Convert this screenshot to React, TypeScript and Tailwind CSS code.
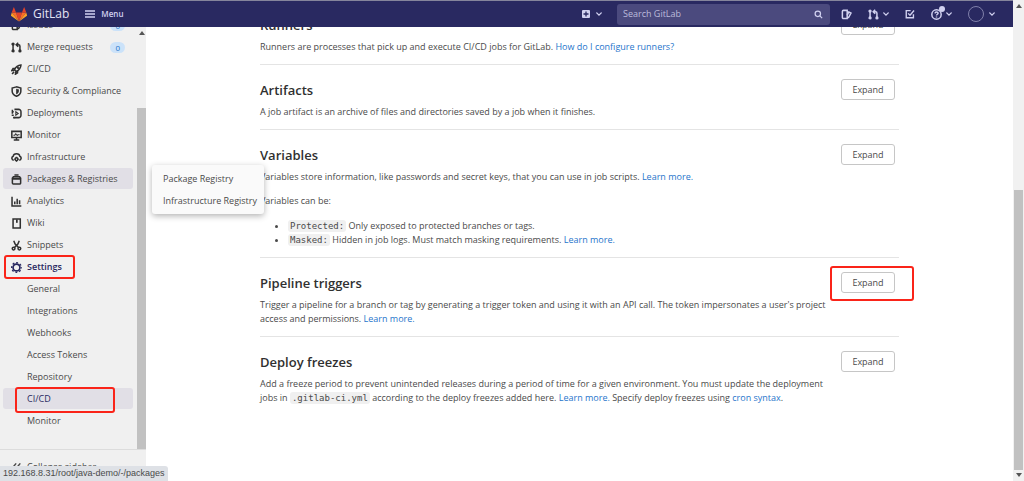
import { ReactNode } from "react"

const iconPaths: Record<string, ReactNode> = {
  issues: <><path d="M9 13.800H3.500A1.500 1.500 0 0 1 2 12.300V3.500A1.500 1.500 0 0 1 3.500 2H9z" /><path d="M9 4.500h2.500L14.500 6 11 12.500H9M11 5l-2 4" /></>,
  merge: <><path d="M3 3v10.500" /><path d="M8 4h3a2 2 0 0 1 2 2v7.500M10.500 1L7.500 4l3 3" /><circle cx="3" cy="3" r="1.300" /><circle cx="13" cy="13" r="1.300" /><circle cx="3" cy="13" r="1.300" /></>,
  rocket: <><path d="M5 8.500C7 4 10 1.800 14.500 1.500 14.200 6 12 9 7.500 11z" /><path d="M6 6.500H3L1.200 9.500l3.500-.5M9.500 10v3l-3 1.800.5-3.500M4.500 11.500L1.500 14.500" /><circle cx="10.500" cy="5.500" r=".8" /></>,
  shield: <><path d="M8 1.300L1.700 3v4.500C1.700 11 4.500 13.500 8 15c3.500-1.500 6.300-4 6.300-7.500V3z" /><path d="M8 4.500v7c2-1 3-2.300 3-4V5.300z" fill="currentColor" strokeWidth="1" /></>,
  deploy: <><path d="M5 2h6a3.500 3.500 0 0 1 3.500 3.500v5A3.500 3.500 0 0 1 11 14H5" /><path d="M1 5.500h3M1 10.500h3M2 2.500v6M3 14h3" /><path d="M7 5.500L10.500 8 7 10.500z" strokeWidth="1.500" /></>,
  monitor: <><path d="M1.200 2h13.600v9H1.200zM4 14.500h8M8 11v3.500" /><path d="M3.500 7.500h2l1.500-2 2 2.500 1-1h2.500" strokeWidth="1.500" /></>,
  cloud: <><path d="M4 12a3 3 0 0 1-.800-5.800C3.500 3.800 5.500 2.500 8 2.500s4.500 1.300 4.800 3.700A3 3 0 0 1 12 12" /><circle cx="8" cy="10.500" r="2" /><path d="M8 7v1.500M8 12.500V14M5 10.500h1M10 10.500h1" /></>,
  package: <><path d="M2 6.500h12V13a1.500 1.500 0 0 1-1.500 1.500h-9A1.500 1.500 0 0 1 2 13z" /><path d="M2 6.500L3.500 4h9L14 6.500M5 1.500h6" /><path d="M2 7h12" strokeWidth="2.500" /></>,
  chart: <><path d="M1.500 1v13.500H15" /><path d="M5.500 8v4M9 4v8M12.500 6v6" /></>,
  wiki: <><path d="M3 1.500h10.500v13H3z" /><path d="M8.500 2v5" strokeWidth="2.500" /></>,
  snippets: <><circle cx="3.800" cy="12.500" r="2" /><circle cx="12.200" cy="12.500" r="2" /><path d="M4 1l2 5 5 5M12 1l-2 5-5 5" /></>,
  todo: <><path d="M13.500 8.500V14H2V2.500h7" /><path d="M5 7l3 3 6.500-7.500" /></>,
  help: <><circle cx="8" cy="8" r="6.800" /><path d="M5.800 6.300C6 4.800 7 4.300 8 4.300c1.300 0 2.300.7 2.300 1.900C10.300 7.600 8 7.700 8 9.500M8 11v1.300" /></>,
  search: <><circle cx="6.800" cy="6.800" r="4.800" /><path d="M10.500 10.500L14.500 14.500" /></>,
  collapse: <path d="M7.500 2L2.500 8l5 6M13.500 2l-5 6 5 6" />,
}

function Icon({ name, className = "size-[11px]" }: { name: string; className?: string }) {
  return (
    <svg viewBox="0 0 16 16" fill="none" stroke="currentColor" strokeWidth="2.200" className={`shrink-0 ${className}`} aria-hidden="true">
      {iconPaths[name]}
    </svg>
  )
}

// eight teeth around a ring
function Gear() {
  return (
    <svg viewBox="0 0 16 16" fill="none" stroke="currentColor" className="size-[11px] shrink-0" aria-hidden="true">
      <circle cx="8" cy="8" r="5" strokeWidth="2.500" />
      <circle cx="8" cy="8" r="7" strokeWidth="2" strokeDasharray="2.750 2.750" strokeDashoffset="1.370" />
    </svg>
  )
}

function Chevron() {
  return (
    <svg viewBox="0 0 8 8" fill="none" stroke="currentColor" strokeWidth="1.800" className="size-[6px] shrink-0" aria-hidden="true">
      <path d="M1 2.500l3 3 3-3" strokeLinecap="round" />
    </svg>
  )
}

function Logo() {
  return (
    <svg viewBox="0 0 32 30" className="h-[15px] w-4" aria-hidden="true">
      <path d="M16 29L22 11H10z" fill="#e24329" />
      <path d="M16 29L10 11H1.500zM16 29L22 11h8.500z" fill="#fc6d26" />
      <path d="M1.500 11L0 16.500c-.2.700 0 1.200.6 1.700L16 29zM30.500 11L32 16.500c.2.700 0 1.200-.6 1.700L16 29z" fill="#fca326" />
      <path d="M1.500 11H10L6.200 1c-.2-.6-.8-.6-1 0zM30.500 11H22L25.800 1c.2-.6.8-.6 1 0z" fill="#e24329" />
    </svg>
  )
}

function Marker({ className }: { className: string }) {
  return <span className={`pointer-events-none absolute z-10 rounded-[3px] border-2 border-[#fa2419] ${className}`} />
}

const menuItems = [
  { label: "Issues", icon: "issues", count: 0 },
  { label: "Merge requests", icon: "merge", count: 0 },
  { label: "CI/CD", icon: "rocket" },
  { label: "Security & Compliance", icon: "shield" },
  { label: "Deployments", icon: "deploy" },
  { label: "Monitor", icon: "monitor" },
  { label: "Infrastructure", icon: "cloud" },
  { label: "Packages & Registries", icon: "package", flyout: ["Package Registry", "Infrastructure Registry"] },
  { label: "Analytics", icon: "chart" },
  { label: "Wiki", icon: "wiki" },
  { label: "Snippets", icon: "snippets" },
]

const settingsItems = ["General", "Integrations", "Webhooks", "Access Tokens", "Repository", "CI/CD", "Monitor"]

function Header() {
  return (
    <header className="fixed inset-x-0 top-0 z-20 mr-[11px] flex h-[27px] items-center border-t border-[#85859c] bg-[#292961] pr-[18px] pl-[11px] text-[#d1d1f0]">
      <a href="#" className="flex items-center gap-[6px] text-[12px] text-[#e4e4f4]">
        <Logo />
        GitLab
      </a>
      <button className="ml-4 flex items-center gap-[6px] text-[8px] font-semibold">
        <svg viewBox="0 0 10 8" stroke="currentColor" strokeWidth="1.500" className="h-2 w-[10px]" aria-hidden="true">
          <path d="M0 1h10M0 4h10M0 7h10" />
        </svg>
        Menu
      </button>
      <button aria-label="Create new" className="ml-auto flex items-center gap-[6px]">
        <svg viewBox="0 0 8 8" className="size-2" aria-hidden="true">
          <rect width="8" height="8" rx="1" fill="currentColor" />
          <path d="M4 1.500v5M1.500 4h5" stroke="#292961" strokeWidth="1.300" />
        </svg>
        <Chevron />
      </button>
      <div className="ml-[15px] flex h-[21px] w-[213px] items-center rounded-[3px] bg-[#4b4a7e] pr-[7px] pl-[6px]">
        <input aria-label="Search GitLab" placeholder="Search GitLab" className="min-w-0 flex-1 bg-transparent text-[9px] outline-none placeholder:text-[#bcbbdc]" />
        <Icon name="search" className="size-[9px]" />
      </div>
      <div className="ml-[11px] flex items-center gap-4">
        <button aria-label="Issues"><Icon name="issues" /></button>
        <button aria-label="Merge requests" className="flex items-center gap-1"><Icon name="merge" /><Chevron /></button>
        <button aria-label="To-Do List"><Icon name="todo" className="size-[10px]" /></button>
        <button aria-label="Help" className="relative flex items-center gap-1">
          <Icon name="help" />
          <span className="absolute -top-[3px] left-2 size-[6px] rounded-full bg-[#d1d1f0]" />
          <Chevron />
        </button>
        <button aria-label="Account" className="flex items-center gap-[5px]">
          <span className="size-4 rounded-full border border-[#8080aa]" />
          <Chevron />
        </button>
      </div>
    </header>
  )
}

function Sidebar() {
  return (
    <aside className="relative z-10 flex w-[146px] shrink-0 flex-col bg-[#f0f0f0]">
      <div className="flex min-h-0 flex-1">
        <nav className="flex min-w-0 flex-1 flex-col gap-px pt-[14px] pr-1 pl-[3px]">
          {menuItems.map((item) => (
            <div key={item.label} className="relative">
              <a href="#" className={`flex h-[21px] items-center gap-[5px] rounded-[3px] px-2 pt-px whitespace-nowrap ${item.flyout ? "bg-[#e1dfe6]" : ""}`}>
                <span className="text-[#303030]"><Icon name={item.icon} /></span>
                {item.label}
                {item.count !== undefined && <span className="ml-auto h-[11px] rounded-full bg-[#cbe2f9] px-[5px] text-[8px] leading-[11px] text-[#1f75cb]">{item.count}</span>}
              </a>
              {item.flyout && (
                <div className="absolute -top-[3px] left-[149px] flex w-28 flex-col gap-px rounded-[3px] bg-[#fafafa] py-[3px] shadow-[0_2px_6px_rgba(0,0,0,0.3)]">
                  {item.flyout.map((label) => <a key={label} href="#" className="flex h-[21px] items-center pt-px pl-[11px] whitespace-nowrap">{label}</a>)}
                </div>
              )}
            </div>
          ))}
          <div className="relative">
            <a href="#" className="flex h-[21px] items-center gap-[5px] px-2 pt-px font-semibold text-[#292961]">
              <Gear />
              Settings
            </a>
            <Marker className="-top-px left-px h-6 w-[71px]" />
          </div>
          {settingsItems.map((label) => (
            <div key={label} className="relative">
              <a href="#" className={`flex h-[21px] items-center rounded-[3px] pt-px pl-6 ${label === "CI/CD" ? "bg-[#e1dfe6] font-medium text-[#292961]" : ""}`}>{label}</a>
              {label === "CI/CD" && <Marker className="-top-px left-3 h-[26px] w-[100px]" />}
            </div>
          ))}
        </nav>
        <div className="flex w-[9px] shrink-0 flex-col items-center pt-[31px]">
          <span className="border-x-3 border-b-4 border-x-transparent border-b-[#555]" />
          <span className="mt-[73px] w-full flex-1 bg-[#c1c1c1]" />
        </div>
      </div>
      <button className="flex h-8 shrink-0 items-center gap-[5px] border-t border-[#dcdcdc] pt-[3px] pl-[11px]">
        <Icon name="collapse" />
        Collapse sidebar
      </button>
    </aside>
  )
}

function Section({ title, marked, children }: { title: string; marked?: boolean; children: ReactNode }) {
  return (
    <section className="flex items-start justify-between border-b border-[#e4e4e4] pt-[14px] pr-1 pb-[10px] last:border-b-0">
      <div className="max-w-[574px]">
        <h4 className="mb-1 text-[13px] leading-[22px] font-semibold text-[#303030]">{title}</h4>
        {children}
      </div>
      <div className="relative">
        <button className="h-[21px] w-[54px] rounded-[3px] border border-[#c6c6c6] bg-white leading-[19px]">Expand</button>
        {marked && <Marker className="-top-[6px] -left-[11px] h-[35px] w-[84px]" />}
      </div>
    </section>
  )
}

function Code({ children }: { children: ReactNode }) {
  return <code className="rounded-[3px] bg-[#f0f0f0] px-[2px] py-px font-['DejaVu_Sans_Mono',monospace] text-[9px] leading-[12px]">{children}</code>
}

function Link({ children }: { children: ReactNode }) {
  return <a href="#" className="text-[#1f75cb]">{children}</a>
}

export default function App() {
  return (
    <div className="flex h-screen overflow-hidden bg-white font-['Open_Sans','Noto_Sans',sans-serif] text-[9px] leading-[14px] text-[#4a4a4a]">
      <Header />
      <Sidebar />
      <main className="min-w-0 flex-1">
        <div className="mx-auto max-w-[639px]">
          <Section title="Runners">
            <p>Runners are processes that pick up and execute CI/CD jobs for GitLab. <Link>How do I configure runners?</Link></p>
          </Section>
          <Section title="Artifacts">
            <p>A job artifact is an archive of files and directories saved by a job when it finishes.</p>
          </Section>
          <Section title="Variables">
            <p>Variables store information, like passwords and secret keys, that you can use in job scripts. <Link>Learn more.</Link></p>
            <p className="mt-[10px]">Variables can be:</p>
            <ul className="mt-[11px] list-disc pl-7">
              <li><Code>Protected:</Code> Only exposed to protected branches or tags.</li>
              <li><Code>Masked:</Code> Hidden in job logs. Must match masking requirements. <Link>Learn more.</Link></li>
            </ul>
          </Section>
          <Section title="Pipeline triggers" marked>
            <p>Trigger a pipeline for a branch or tag by generating a trigger token and using it with an API call. The token impersonates a user's project access and permissions. <Link>Learn more.</Link></p>
          </Section>
          <Section title="Deploy freezes">
            <p>Add a freeze period to prevent unintended releases during a period of time for a given environment. You must update the deployment jobs in <Code>.gitlab-ci.yml</Code> according to the deploy freezes added here. <Link>Learn more.</Link> Specify deploy freezes using <Link>cron syntax</Link>.</p>
          </Section>
        </div>
      </main>
      <div className="flex w-[11px] shrink-0 flex-col items-center bg-[#f1f1f1] py-1">
        <span className="border-x-3 border-b-4 border-x-transparent border-b-[#555]" />
        <span className="mt-[182px] w-[9px] flex-1 bg-[#c1c1c1]" />
        <span className="mt-[3px] border-x-3 border-t-4 border-x-transparent border-t-[#555]" />
      </div>
      <div className="fixed bottom-0 left-0 z-20 min-w-[166px] rounded-tr-[3px] bg-[#dee1e6] px-[3px] font-['Liberation_Sans',sans-serif] leading-[15px] whitespace-nowrap">192.168.8.31/root/java-demo/-/packages</div>
    </div>
  )
}
